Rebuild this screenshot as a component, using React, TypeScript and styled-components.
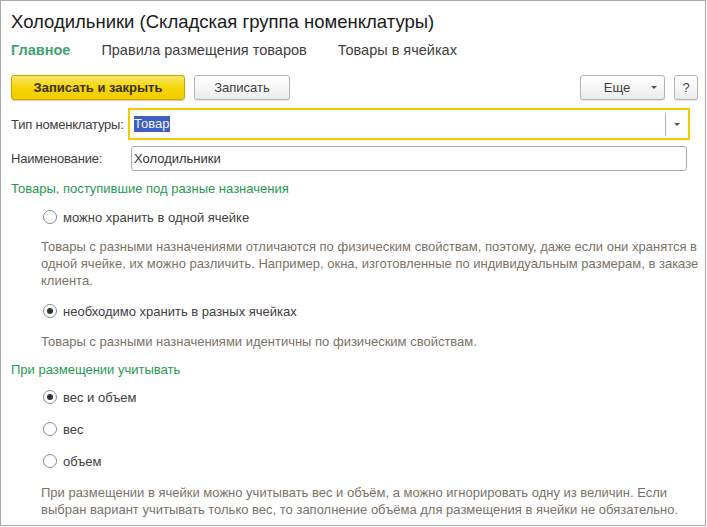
import styled, { createGlobalStyle } from "styled-components";

const GlobalStyle = createGlobalStyle`
	html, body {
		margin: 0;
		padding: 0;
		background: #ffffff;
	}
	body {
		font-family: "Liberation Sans", Arial, sans-serif;
		font-size: 13px;
		color: #333333;
	}
`;

type Radio = { label: string; checked?: boolean; top: number };

const storeOptions: Radio[] = [
	{ label: "можно хранить в одной ячейке", top: 10 },
];

const measureOptions: Radio[] = [
	{ label: "вес и объем", checked: true, top: 9 },
	{ label: "вес", top: 14 },
	{ label: "объем", top: 14 },
];

export default function App() {
	return (
		<>
			<GlobalStyle />
			<Frame>
				<Title>Холодильники (Складская группа номенклатуры)</Title>
				<Tabs>
					<Tab active>Главное</Tab>
					<Tab>Правила размещения товаров</Tab>
					<Tab>Товары в ячейках</Tab>
				</Tabs>

				<Toolbar>
					<ButtonGroup>
						<Button primary width={174}>
							Записать и закрыть
						</Button>
						<Button width={96}>Записать</Button>
					</ButtonGroup>
					<ButtonGroup>
						<MoreButton>
							<span>Еще</span>
							<Arrow />
						</MoreButton>
						<Button width={24}>?</Button>
					</ButtonGroup>
				</Toolbar>

				<FieldRow top={8}>
					<Label width={117}>Тип номенклатуры:</Label>
					<SelectField>
						<Selected>Товар</Selected>
						<SelectDivider />
						<SelectArrow>
							<Arrow />
						</SelectArrow>
					</SelectField>
				</FieldRow>
				<FieldRow top={6}>
					<Label width={120}>Наименование:</Label>
					<TextField>Холодильники</TextField>
				</FieldRow>

				<GroupTitle top={9}>Товары, поступившие под разные назначения</GroupTitle>
				{storeOptions.map((o) => (
					<RadioRow key={o.label} top={o.top}>
						<RadioCircle checked={o.checked} />
						{o.label}
					</RadioRow>
				))}
				<Hint top={12}>
					Товары с разными назначениями отличаются по физическим свойствам, поэтому, даже если они хранятся в
					<br />
					одной ячейке, их можно различить. Например, окна, изготовленные по индивидуальным размерам, в заказе
					<br />
					клиента.
				</Hint>
				<RadioRow top={13}>
					<RadioCircle checked />
					необходимо хранить в разных ячейках
				</RadioRow>
				<Hint top={13}>Товары с разными назначениями идентичны по физическим свойствам.</Hint>

				<GroupTitle top={11}>При размещении учитывать</GroupTitle>
				{measureOptions.map((o) => (
					<RadioRow key={o.label} top={o.top}>
						<RadioCircle checked={o.checked} />
						{o.label}
					</RadioRow>
				))}
				<Hint top={14}>
					При размещении в ячейки можно учитывать вес и объём, а можно игнорировать одну из величин. Если
					<br />
					выбран вариант учитывать только вес, то заполнение объёма для размещения в ячейки не обязательно.
				</Hint>
			</Frame>
		</>
	);
}

const Frame = styled.div`
	box-sizing: border-box;
	width: 706px;
	height: 526px;
	border: 1px solid #a9a9a9;
	padding: 0 7px 0 10px;
	background: #ffffff;
	overflow: hidden;
`;

const Title = styled.h1`
	margin: 10px 0 0;
	font-size: 18.5px;
	font-weight: normal;
	line-height: 22px;
	color: #1a1a1a;
	white-space: nowrap;
`;

const Tabs = styled.div`
	margin-top: 8px;
	height: 18px;
	display: flex;
	align-items: center;
	gap: 31px;
`;

const Tab = styled.div<{ active?: boolean }>`
	font-size: 14.5px;
	line-height: 18px;
	color: ${(p) => (p.active ? "#3fa36f" : "#404040")};
	font-weight: ${(p) => (p.active ? "bold" : "normal")};
	white-space: nowrap;
`;

const Toolbar = styled.div`
	margin-top: 16px;
	display: flex;
	align-items: center;
	justify-content: space-between;
`;

const ButtonGroup = styled.div`
	display: flex;
	align-items: center;
	gap: 9px;
`;

const Button = styled.div<{ primary?: boolean; width: number }>`
	box-sizing: border-box;
	width: ${(p) => p.width}px;
	height: 25px;
	display: flex;
	align-items: center;
	justify-content: center;
	border-radius: 3px;
	font-size: 13px;
	font-weight: ${(p) => (p.primary ? "bold" : "normal")};
	color: ${(p) => (p.primary ? "#3a3000" : "#404040")};
	border: 1px solid ${(p) => (p.primary ? "#c8a800" : "#b3b3b3")};
	background: ${(p) =>
		p.primary
			? "linear-gradient(#fbe668, #f5d400 55%, #f1cc00)"
			: "linear-gradient(#ffffff, #f6f6f6 55%, #ebebeb)"};
	box-shadow: 0 1px 1px ${(p) => (p.primary ? "rgba(140, 110, 0, 0.35)" : "rgba(0, 0, 0, 0.12)")};
`;

const MoreButton = styled(Button).attrs({ width: 85 })`
	justify-content: flex-start;
	padding: 0 7px 0 20px;
	span {
		flex: 1;
		padding-right: 18px;
		text-align: center;
	}
`;

const Arrow = styled.i`
	display: block;
	width: 0;
	height: 0;
	border-left: 3px solid transparent;
	border-right: 3px solid transparent;
	border-top: 3px solid #555555;
`;

const FieldRow = styled.div<{ top: number }>`
	margin-top: ${(p) => p.top}px;
	padding-right: 11px;
	display: flex;
	align-items: center;
`;

const Label = styled.div<{ width: number }>`
	width: ${(p) => p.width}px;
	flex-shrink: 0;
	color: #404040;
	white-space: nowrap;
	letter-spacing: -0.2px;
`;

const SelectField = styled.div`
	box-sizing: border-box;
	flex: 1;
	margin-right: -3px;
	height: 32px;
	border: 2px solid #f5c800;
	display: flex;
	align-items: center;
	padding-left: 4px;
`;

const Selected = styled.span`
	flex: 1;
	line-height: 16px;
	color: #f4f4ff;
	background: linear-gradient(to right, #3e5fbf 0, #3e5fbf 36px, transparent 36px);
`;

const SelectDivider = styled.div`
	width: 1px;
	height: 23px;
	background: #b0b0b0;
`;

const SelectArrow = styled.div`
	width: 22px;
	display: flex;
	justify-content: center;
`;

const TextField = styled.div`
	box-sizing: border-box;
	flex: 1;
	height: 25px;
	border: 1px solid #a9a9a9;
	border-radius: 3px;
	padding-left: 2px;
	display: flex;
	align-items: center;
	color: #333333;
`;

const GroupTitle = styled.div<{ top: number }>`
	margin-top: ${(p) => p.top}px;
	line-height: 18px;
	color: #1f9a52;
`;

const RadioRow = styled.div<{ top: number }>`
	margin-top: ${(p) => p.top}px;
	margin-left: 32px;
	height: 18px;
	display: flex;
	align-items: center;
	gap: 6px;
	color: #404040;
`;

const RadioCircle = styled.span<{ checked?: boolean }>`
	box-sizing: border-box;
	width: 14px;
	height: 14px;
	border-radius: 50%;
	border: 1px solid #8a8a8a;
	background: #ffffff;
	display: flex;
	align-items: center;
	justify-content: center;
	&::after {
		content: "";
		width: 6px;
		height: 6px;
		border-radius: 50%;
		background: #333333;
		display: ${(p) => (p.checked ? "block" : "none")};
	}
`;

const Hint = styled.div<{ top: number }>`
	margin-top: ${(p) => p.top}px;
	margin-left: 30px;
	line-height: 17px;
	color: #7a7268;
	white-space: nowrap;
`;
